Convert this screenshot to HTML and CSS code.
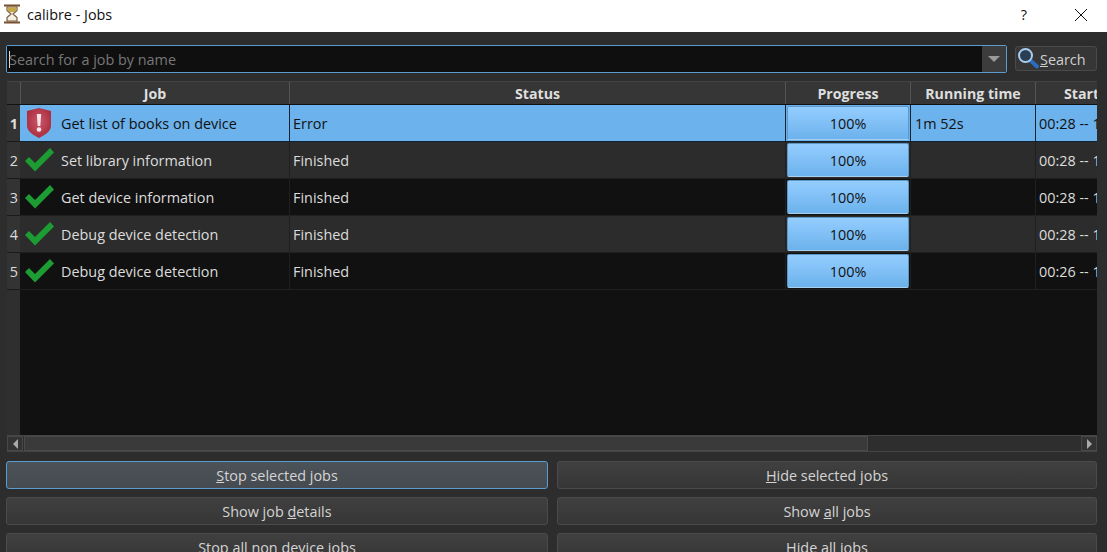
FILE: index.html
```html
<!DOCTYPE html>
<html lang="en">
<head>
<meta charset="utf-8">
<title>calibre - Jobs</title>
<link rel="stylesheet" href="styles.css">
</head>
<body>
<div class="window">
  <header class="titlebar">
    <svg class="app-icon" viewBox="0 0 18 20" width="18" height="20">
      <path d="M4 3h10v3.500L10 10l4 3.500V17H4v-3.500L8 10 4 6.500z" fill="#f3efe2" stroke="#7a5a3c" stroke-width="1.200"/>
      <path d="M4.500 3.500h9v3L11.500 8h-5L4.500 6.500z" fill="#c2a84a"/>
      <path d="M1 1.500h16M1 18.500h16" stroke="#76502f" stroke-width="2.200"/>
    </svg>
    <span class="title">calibre - Jobs</span>
    <span class="help">?</span>
    <svg class="close" viewBox="0 0 12 12" width="12" height="12"><path d="M0 0l12 12M12 0L0 12" stroke="#111" stroke-width="1" fill="none"/></svg>
  </header>
  <main class="content">
    <div class="searchbar">
      <div class="combo">
        <div class="combo-field"><span class="caret"></span><span class="placeholder">Search for a job by name</span></div>
        <div class="combo-arrow"><span class="arrow-down"></span></div>
      </div>
      <div class="search-btn">
        <svg viewBox="0 0 22 22" width="22" height="22">
          <path d="M13.500 13.500L20 19.500" stroke="#2a6cc0" stroke-width="4" stroke-linecap="round"/>
          <circle cx="8.500" cy="8.500" r="6.500" fill="#2b3f52" stroke="#a8cdf0" stroke-width="2"/>
        </svg>
        <span><u>S</u>earch</span>
      </div>
    </div>

    <section class="table">
      <div class="table-head">
        <div class="corner"></div>
        <div class="hcell h-job">Job</div>
        <div class="hcell h-status">Status</div>
        <div class="hcell h-progress">Progress</div>
        <div class="hcell h-time">Running time</div>
        <div class="hcell h-start">Start</div>
      </div>
      <div class="table-rows">
        <div class="row selected">
          <div class="rownum">1</div>
          <div class="cell c-job"><svg class="shield" viewBox="0 0 28 32" width="28" height="32"><defs><radialGradient id="sh" cx="50%" cy="45%" r="60%"><stop offset="0" stop-color="#c9596a"/><stop offset="1" stop-color="#a8293b"/></radialGradient></defs><path d="M14 1l12 3v15c0 5-6 9-12 12C8 28 2 24 2 19V4z" fill="url(#sh)"/><path d="M11.800 7h4.400l-.9 12h-2.600z" fill="#f2e6e8"/><circle cx="14" cy="22.500" r="2.300" fill="#f2e6e8"/></svg><span>Get list of books on device</span></div>
          <div class="cell c-status">Error</div>
          <div class="cell c-progress"><div class="bar">100%</div></div>
          <div class="cell c-time">1m 52s</div>
          <div class="cell c-start">00:28 -- 1</div>
        </div>
        <div class="row alt">
          <div class="rownum">2</div>
          <div class="cell c-job"><svg class="tick" viewBox="0 0 32 26" width="32" height="26"><path d="M2 14l4-4 6 6L27 1l4 4.500L12 24.500z" fill="#1c9c33"/></svg><span>Set library information</span></div>
          <div class="cell c-status">Finished</div>
          <div class="cell c-progress"><div class="bar">100%</div></div>
          <div class="cell c-time"></div>
          <div class="cell c-start">00:28 -- 1</div>
        </div>
        <div class="row">
          <div class="rownum">3</div>
          <div class="cell c-job"><svg class="tick" viewBox="0 0 32 26" width="32" height="26"><path d="M2 14l4-4 6 6L27 1l4 4.500L12 24.500z" fill="#1c9c33"/></svg><span>Get device information</span></div>
          <div class="cell c-status">Finished</div>
          <div class="cell c-progress"><div class="bar">100%</div></div>
          <div class="cell c-time"></div>
          <div class="cell c-start">00:28 -- 1</div>
        </div>
        <div class="row alt">
          <div class="rownum">4</div>
          <div class="cell c-job"><svg class="tick" viewBox="0 0 32 26" width="32" height="26"><path d="M2 14l4-4 6 6L27 1l4 4.500L12 24.500z" fill="#1c9c33"/></svg><span>Debug device detection</span></div>
          <div class="cell c-status">Finished</div>
          <div class="cell c-progress"><div class="bar">100%</div></div>
          <div class="cell c-time"></div>
          <div class="cell c-start">00:28 -- 1</div>
        </div>
        <div class="row">
          <div class="rownum">5</div>
          <div class="cell c-job"><svg class="tick" viewBox="0 0 32 26" width="32" height="26"><path d="M2 14l4-4 6 6L27 1l4 4.500L12 24.500z" fill="#1c9c33"/></svg><span>Debug device detection</span></div>
          <div class="cell c-status">Finished</div>
          <div class="cell c-progress"><div class="bar">100%</div></div>
          <div class="cell c-time"></div>
          <div class="cell c-start">00:26 -- 1</div>
        </div>
        <div class="filler"><div class="filler-gutter"></div></div>
      </div>
      <div class="hscroll">
        <div class="sb-btn"><span class="arrow-left"></span></div>
        <div class="sb-track"><div class="sb-thumb"></div></div>
        <div class="sb-btn"><span class="arrow-right"></span></div>
      </div>
    </section>

    <div class="buttons">
      <div class="btn focused"><span><u>S</u>top selected jobs</span></div>
      <div class="btn"><span><u>H</u>ide selected jobs</span></div>
      <div class="btn"><span>Show job <u>d</u>etails</span></div>
      <div class="btn"><span>Show <u>a</u>ll jobs</span></div>
      <div class="btn"><span>Stop all non device jobs</span></div>
      <div class="btn"><span>Hide all jobs</span></div>
    </div>
  </main>
</div>
</body>
</html>
```
FILE: styles.css
```css
* { box-sizing: border-box; }
html, body { margin: 0; padding: 0; height: 100%; overflow: hidden; }
body { font-family: "Open Sans", "Noto Sans", "Liberation Sans", sans-serif; font-size: 14.4px; color: #dcdcdc; }
.window { height: 552px; display: flex; flex-direction: column; background: #2d2d2d; overflow: hidden; }

.titlebar { height: 32px; flex: none; background: #fff; color: #111; display: flex; align-items: center; padding: 0 20px 4px 3px; }
.app-icon { flex: none; margin-right: 6px; }
.title { flex: 1; }
.help { margin-right: 48px; }
.close { flex: none; margin-top: 2px; }

.content { flex: 1; min-height: 0; padding: 13px 10px 0 6px; display: flex; flex-direction: column; }

.searchbar { display: flex; align-items: flex-start; height: 28px; flex: none; }
.combo { width: 1001px; height: 28px; display: flex; border: 1px solid #5a9bd0; border-radius: 2px; background: #3a3a3a; }
.combo-field { flex: 1; background: #0f0f0f; display: flex; align-items: center; padding-left: 2px; }
.caret { width: 1px; height: 17px; background: #ddd; }
.placeholder { color: #777; margin-left: -1px; }
.combo-arrow { width: 24px; flex: none; display: flex; align-items: center; justify-content: center; background: #3c3c3c; }
.arrow-down { width: 0; height: 0; border-left: 6px solid transparent; border-right: 6px solid transparent; border-top: 6px solid #9a9a9a; }
.search-btn { margin: 1px 0 0 8px; width: 82px; height: 25px; border: 1px solid #4a4a4a; border-radius: 3px; background: #363636; display: flex; align-items: center; padding: 1px 0 0 1px; color: #cfcfcf; }
.search-btn svg { flex: none; margin: -2px 1px 0 0; }

.table { margin: 8px 0 0 1px; height: 371px; flex: none; display: flex; flex-direction: column; border-top: 1px solid #444; background: #111; overflow: hidden; }
.table-head { height: 23px; flex: none; display: flex; background: #363636; border-bottom: 1px solid #111; font-weight: 700; font-size: 14.2px; color: #dedede; }
.corner { width: 13px; flex: none; background: #363636; }
.hcell { display: flex; align-items: center; justify-content: center; border-left: 1px solid #555; white-space: nowrap; flex: none; }
.h-job { width: 269px; }
.h-status { width: 496px; }
.h-progress { width: 125px; }
.h-time { width: 125px; }
.h-start { width: 92px; }

.table-rows { flex: 1; min-height: 0; display: flex; flex-direction: column; }
.row { height: 37px; flex: none; display: flex; background: #111; color: #dcdcdc; }
.row.alt { background: #2c2c2c; }
.row.selected { background: #6cb2ec; color: #111; }
.rownum { width: 13px; flex: none; background: #333; color: #dcdcdc; border-bottom: 1px solid #1a1a1a; display: flex; align-items: center; justify-content: flex-end; padding-right: 2px; }
.row.selected .rownum { font-weight: 700; }
.cell { display: flex; align-items: center; padding-left: 3px; border-right: 1px solid #202020; border-bottom: 1px solid #202020; white-space: nowrap; flex: none; }
.row.selected .cell { border-color: #123; }
.c-job { width: 270px; padding-left: 3px; }
.c-status { width: 496px; }
.c-progress { width: 125px; padding: 1px; }
.c-time { width: 125px; padding-left: 4px; }
.c-start { width: 92px; border-right: 0; }
.shield { flex: none; margin: 0 8px 0 2px; }
.tick { flex: none; margin-right: 6px; }
.bar { width: 100%; height: 100%; background: linear-gradient(#94cdff, #6cb2ec); border: 1px solid #5c97c6; border-bottom-color: #a8cfee; border-radius: 2px; color: #111; display: flex; align-items: center; justify-content: center; }
.filler { flex: 1; min-height: 0; display: flex; background: #111; }
.filler-gutter { width: 13px; background: #2f2f2f; }

.hscroll { height: 17px; flex: none; display: flex; background: #2e2e2e; border-top: 1px solid #444; border-bottom: 1px solid #444; }
.sb-btn { width: 16px; flex: none; display: flex; align-items: center; justify-content: center; background: #333; border: 1px solid #484848; }
.sb-track { flex: 1; min-width: 0; padding-left: 1px; }
.sb-thumb { width: 844px; height: 100%; background: #3a3a3a; border: 1px solid #4a4a4a; }
.arrow-left { width: 0; height: 0; border-top: 5px solid transparent; border-bottom: 5px solid transparent; border-right: 5px solid #aaa; }
.arrow-right { width: 0; height: 0; border-top: 5px solid transparent; border-bottom: 5px solid transparent; border-left: 5px solid #aaa; }

.buttons { margin-top: 9px; display: grid; grid-template-columns: 542px 540px; column-gap: 9px; row-gap: 8px; grid-auto-rows: 28px; }
.btn { border: 1px solid #4b4b4b; border-radius: 3px; background: linear-gradient(#404040, #363636); color: #d4d4d4; display: flex; align-items: center; justify-content: center; }
.btn.focused { border-color: #5a9bd0; background: linear-gradient(#4c5358, #454b50); }
```
